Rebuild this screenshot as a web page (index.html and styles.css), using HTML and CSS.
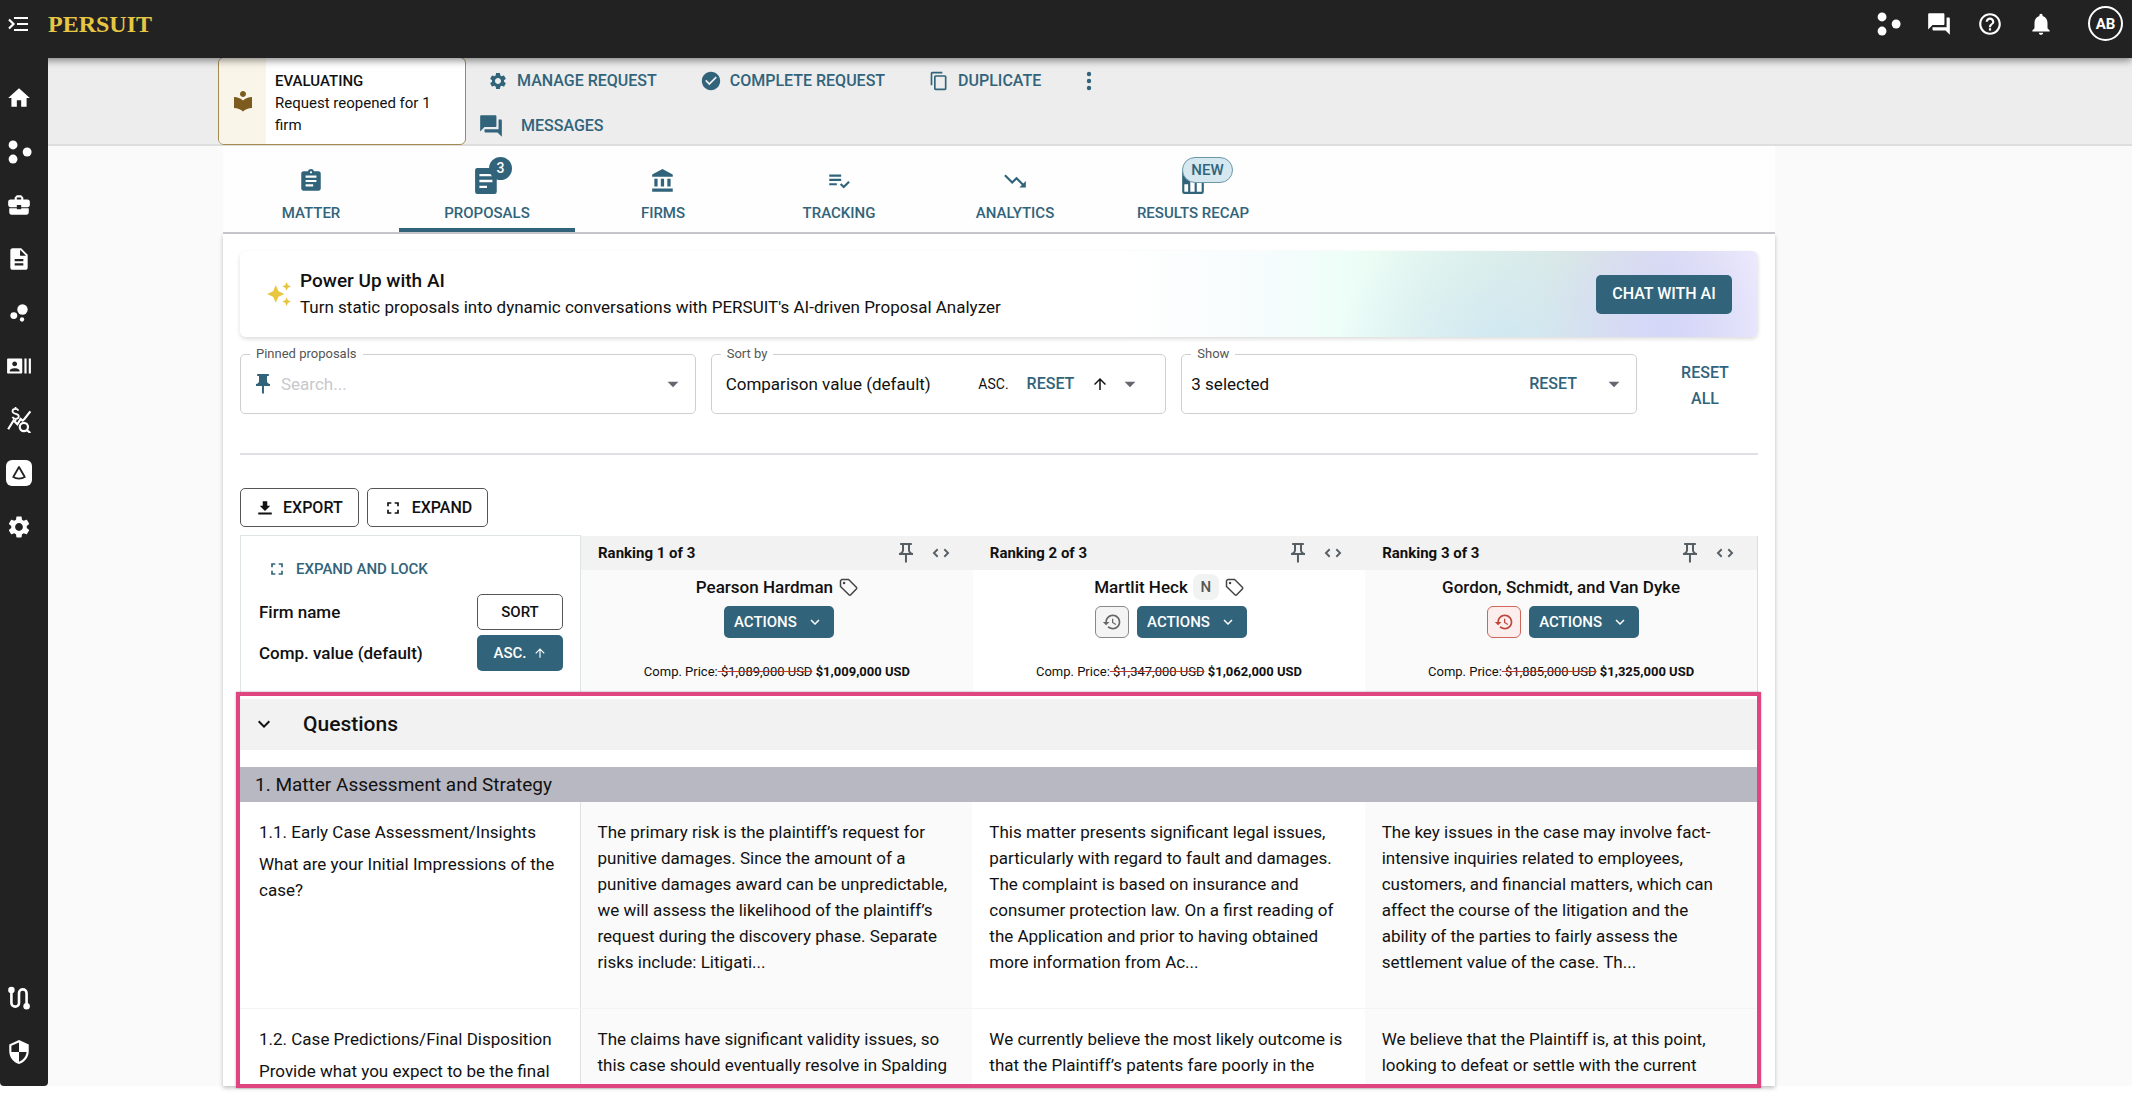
FILE: index.html
```html
<!DOCTYPE html>
<html lang="en">

<head>
  <meta charset="UTF-8" />
  <meta name="viewport" content="width=device-width, initial-scale=1" />
  <title>PERSUIT - Proposals</title>
  <link rel="stylesheet" href="styles.css">
</head>

<body>

  <!-- Icon sprite -->
  <svg class="sprite" aria-hidden="true">
    <symbol id="i-menu" viewBox="0 0 24 24"><path d="M8 6h14M11 12h11M8 18h14M3 7.500l4.500 4.500L3 16.500" fill="none" stroke="currentColor" stroke-width="2.200"/></symbol>
    <symbol id="i-dots" viewBox="0 0 24 24"><circle cx="6.500" cy="5.500" r="4.100"/><circle cx="6.500" cy="18.500" r="4.100"/><circle cx="19.500" cy="12" r="4.100"/></symbol>
    <symbol id="i-home" viewBox="0 0 24 24"><path d="M10 20v-6h4v6h5v-8h3L12 3 2 12h3v8z"/></symbol>
    <symbol id="i-case" viewBox="0 0 24 24"><path d="M10 16v-1H3.010L3 19c0 1.110.890 2 2 2h14c1.110 0 2-.890 2-2v-4h-7v1h-4zm10-9h-4.010V5l-2-2h-4l-2 2v2H4c-1.100 0-2 .900-2 2v3c0 1.110.890 2 2 2h6v-2h4v2h6c1.100 0 2-.900 2-2V9c0-1.100-.900-2-2-2zm-6 0h-4V5h4v2z"/></symbol>
    <symbol id="i-doc" viewBox="0 0 24 24"><path d="M14 2H6c-1.100 0-1.990.900-1.990 2L4 20c0 1.100.890 2 1.990 2H18c1.100 0 2-.900 2-2V8l-6-6zm2 16H8v-2h8v2zm0-4H8v-2h8v2zm-3-5V3.500L18.500 9H13z"/></symbol>
    <symbol id="i-bubbles" viewBox="0 0 24 24"><circle cx="7.200" cy="14.400" r="3.200"/><circle cx="14.800" cy="18" r="2"/><circle cx="15.200" cy="8.800" r="4.800"/></symbol>
    <symbol id="i-people" viewBox="0 0 24 24"><path d="M21 5v14h2V5h-2zm-4 14h2V5h-2v14zM14 5H2c-.55 0-1 .45-1 1v12c0 .55.45 1 1 1h12c.55 0 1-.45 1-1V6c0-.55-.45-1-1-1zM8 7.750c1.240 0 2.250 1.010 2.250 2.250S9.240 12.250 8 12.250 5.750 11.240 5.750 10 6.760 7.750 8 7.750zM12.500 17h-9v-.75c0-1.500 3-2.250 4.500-2.250s4.500.75 4.500 2.250V17z"/></symbol>
    <symbol id="i-rates" viewBox="0 0 24 24"><g fill="none" stroke="currentColor" stroke-width="2"><path d="M2 20.500l5-8 3.500 3.500 3-5 1.800 1.600 1.700-1.600L22.500 4"/><circle cx="16.500" cy="18.500" r="3.800"/><path d="M19.300 21.300l3.200 2.700"/><path d="M11.500 3.300C11 2.200 10 1.800 8.800 1.800c-1.600 0-2.800.8-2.800 2.200 0 3.200 5.800 1.500 5.800 4.600 0 1.400-1.300 2.300-2.900 2.300-1.300 0-2.500-.6-3-1.700M8.800 0v2M8.800 11v2" stroke-width="1.600"/></g></symbol>
    <symbol id="i-prism" viewBox="0 0 26 26"><rect width="26" height="26" rx="6"/><path d="M7.500 16.500L13 7l5.500 9.500M6.500 16.500c4 2.600 9 2.600 13 0" fill="none" stroke="#222" stroke-width="1.800" stroke-linejoin="round"/></symbol>
    <symbol id="i-gear" viewBox="0 0 24 24"><path d="M19.140 12.940c.04-.3.060-.61.060-.94 0-.32-.02-.64-.07-.94l2.030-1.580c.18-.14.230-.41.120-.61l-1.920-3.320c-.12-.22-.37-.29-.59-.22l-2.390.96c-.5-.38-1.030-.7-1.620-.94l-.36-2.540c-.04-.24-.24-.41-.48-.41h-3.840c-.24 0-.43.170-.47.410l-.36 2.540c-.59.240-1.130.570-1.620.940l-2.390-.96c-.22-.08-.47 0-.59.220L2.740 8.870c-.12.210-.08.470.120.610l2.030 1.580c-.05.300-.09.630-.09.940s.020.640.070.940l-2.030 1.580c-.18.140-.23.410-.12.610l1.920 3.320c.12.220.37.290.59.220l2.390-.96c.5.380 1.030.7 1.620.94l.36 2.540c.05.240.24.410.48.410h3.840c.24 0 .44-.17.470-.41l.36-2.540c.59-.24 1.130-.56 1.620-.94l2.390.96c.22.080.47 0 .59-.22l1.920-3.320c.12-.22.070-.47-.12-.61l-2.010-1.580zM12 15.600c-1.980 0-3.600-1.620-3.600-3.600s1.620-3.600 3.600-3.600 3.600 1.620 3.600 3.600-1.620 3.600-3.600 3.600z"/></symbol>
    <symbol id="i-route" viewBox="0 0 24 24"><path d="M5 4v12.500a3.500 3.500 0 0 0 7 0v-9a3.500 3.500 0 0 1 7 0V20" fill="none" stroke="currentColor" stroke-width="2.400"/><circle cx="5" cy="4.500" r="3"/><circle cx="19" cy="19.500" r="3"/></symbol>
    <symbol id="i-shield" viewBox="0 0 24 24"><path d="M12 1L3 5v6c0 5.550 3.840 10.740 9 12 5.160-1.260 9-6.450 9-12V5l-9-4zm0 10.990h7c-.53 4.120-3.280 7.790-7 8.940V12H5V6.300l7-3.110v8.800z"/></symbol>
    <symbol id="i-chat" viewBox="0 0 24 24"><path d="M21 6h-2v9H6v2c0 .55.45 1 1 1h11l4 4V7c0-.55-.45-1-1-1zm-4 6V3c0-.55-.45-1-1-1H3c-.55 0-1 .45-1 1v14l4-4h10c.55 0 1-.45 1-1z"/></symbol>
    <symbol id="i-help" viewBox="0 0 24 24"><path d="M11 18h2v-2h-2v2zm1-16C6.480 2 2 6.480 2 12s4.480 10 10 10 10-4.480 10-10S17.520 2 12 2zm0 18c-4.410 0-8-3.590-8-8s3.590-8 8-8 8 3.590 8 8-3.590 8-8 8zm0-14c-2.210 0-4 1.790-4 4h2c0-1.100.900-2 2-2s2 .900 2 2c0 2-3 1.750-3 5h2c0-2.250 3-2.500 3-5 0-2.210-1.790-4-4-4z"/></symbol>
    <symbol id="i-bell" viewBox="0 0 24 24"><path d="M12 22c1.100 0 2-.900 2-2h-4c0 1.100.890 2 2 2zm6-6v-5c0-3.070-1.640-5.640-4.500-6.320V4c0-.83-.67-1.500-1.500-1.500s-1.500.67-1.500 1.500v.68C7.630 5.360 6 7.920 6 11v5l-2 2v1h16v-1l-2-2z"/></symbol>
    <symbol id="i-reader" viewBox="0 0 24 24"><path d="M12 11.550C9.640 9.350 6.480 8 3 8v11c3.480 0 6.640 1.350 9 3.550 2.360-2.190 5.520-3.550 9-3.550V8c-3.480 0-6.640 1.350-9 3.550zM12 8c1.660 0 3-1.340 3-3s-1.340-3-3-3-3 1.340-3 3 1.340 3 3 3z"/></symbol>
    <symbol id="i-check" viewBox="0 0 24 24"><path d="M12 1C5.900 1 1 5.900 1 12s4.900 11 11 11 11-4.900 11-11S18.100 1 12 1zm-2 16l-5-5 1.410-1.410L10 14.170l7.590-7.590L19 8l-9 9z"/></symbol>
    <symbol id="i-copy" viewBox="0 0 24 24"><path d="M16 1H4c-1.100 0-2 .900-2 2v14h2V3h12V1zm3 4H8c-1.100 0-2 .900-2 2v14c0 1.100.900 2 2 2h11c1.100 0 2-.900 2-2V7c0-1.100-.900-2-2-2zm0 16H8V7h11v14z"/></symbol>
    <symbol id="i-more" viewBox="0 0 24 24"><circle cx="12" cy="5" r="2.200"/><circle cx="12" cy="12" r="2.200"/><circle cx="12" cy="19" r="2.200"/></symbol>
    <symbol id="i-clipboard" viewBox="0 0 24 24"><path d="M19 3h-4.180C14.400 1.840 13.300 1 12 1c-1.300 0-2.400.84-2.820 2H5c-1.100 0-2 .900-2 2v14c0 1.100.900 2 2 2h14c1.100 0 2-.900 2-2V5c0-1.100-.900-2-2-2zm-7 0c.55 0 1 .45 1 1s-.45 1-1 1-1-.45-1-1 .45-1 1-1zm2 14H7v-2h7v2zm3-4H7v-2h10v2zm0-4H7V7h10v2z"/></symbol>
    <symbol id="i-article" viewBox="0 0 24 24"><path d="M3 0h16a2 2 0 0 1 2 2v20a2 2 0 0 1-2 2H3a2 2 0 0 1-2-2V2a2 2 0 0 1 2-2zM5 5.500v2.200h12V5.500zM5 10.900v2.200h12v-2.200zM5 16.300v2.200h7v-2.200z" fill-rule="evenodd"/></symbol>
    <symbol id="i-bank" viewBox="0 0 24 24"><path d="M4 10v7h3v-7H4zm6 0v7h3v-7h-3zM2 22h19v-3H2v3zm14-12v7h3v-7h-3zm-4.500-9L2 6v2h19V6l-9.500-5z"/></symbol>
    <symbol id="i-tracking" viewBox="0 0 24 24"><path d="M3 10h11v2H3zM3 6h11v2H3zM3 14h7v2H3zM20.590 11.930l-4.250 4.240-2.120-2.120-1.410 1.410 3.530 3.530L22 13.340z"/></symbol>
    <symbol id="i-down-trend" viewBox="0 0 24 24"><path d="M16 18l2.290-2.290-4.880-4.880-4 4L2 7.410 3.410 6l6 6 4-4 6.300 6.290L22 12v6z"/></symbol>
    <symbol id="i-recap" viewBox="0 0 24 24"><path d="M4 2h16a2 2 0 0 1 2 2v18a2 2 0 0 1-2 2H4a2 2 0 0 1-2-2V4a2 2 0 0 1 2-2zm0 13v7h3.500v-7zm5.500-4v11h4V11zm6 0v11H20V11z" fill-rule="evenodd"/></symbol>
    <symbol id="i-sparkle" viewBox="0 0 24 24"><path d="M19 9l1.250-2.750L23 5l-2.750-1.250L19 1l-1.250 2.750L15 5l2.750 1.250L19 9zm-7.500.5L9 4 6.500 9.500 1 12l5.500 2.500L9 20l2.500-5.500L17 12l-5.500-2.500zM19 15l-1.250 2.750L15 19l2.750 1.250L19 23l1.250-2.750L23 19l-2.750-1.250L19 15z"/></symbol>
    <symbol id="i-pin" viewBox="0 0 24 24"><path d="M16 9V4h1c.55 0 1-.45 1-1s-.45-1-1-1H7c-.55 0-1 .45-1 1s.45 1 1 1h1v5c0 1.660-1.340 3-3 3v2h5.970v7l1 1 1-1v-7H19v-2c-1.660 0-3-1.340-3-3z"/></symbol>
    <symbol id="i-pin-line" viewBox="0 0 24 24"><path d="M14 4v5c0 1.120.370 2.160 1 3H9c.65-.86 1-1.900 1-3V4h4m3-2H7c-.55 0-1 .45-1 1s.45 1 1 1h1v5c0 1.660-1.340 3-3 3v2h5.970v7l1 1 1-1v-7H19v-2c-1.660 0-3-1.340-3-3V4h1c.55 0 1-.45 1-1s-.45-1-1-1z"/></symbol>
    <symbol id="i-code" viewBox="0 0 24 24"><path d="M8 7.500L3.500 12 8 16.500M16 7.500l4.500 4.500-4.500 4.500" fill="none" stroke="currentColor" stroke-width="2.200"/></symbol>
    <symbol id="i-tag" viewBox="0 0 24 24"><path d="M3 4.500L4.500 3h8.200L22 12.300a1.500 1.500 0 0 1 0 2l-6.700 7a1.500 1.500 0 0 1-2.200 0L3 11.500z" fill="none" stroke="currentColor" stroke-width="1.800" stroke-linejoin="round"/><circle cx="7.300" cy="7.300" r="1.500"/></symbol>
    <symbol id="i-history" viewBox="0 0 24 24"><path d="M13 3c-4.970 0-9 4.030-9 9H1l3.890 3.890.07.14L9 12H6c0-3.870 3.130-7 7-7s7 3.130 7 7-3.130 7-7 7c-1.930 0-3.680-.79-4.940-2.060l-1.420 1.420C8.270 19.990 10.510 21 13 21c4.970 0 9-4.030 9-9s-4.030-9-9-9zm-1 5v5l4.280 2.540.72-1.210-3.500-2.080V8H12z"/></symbol>
    <symbol id="i-download" viewBox="0 0 24 24"><path d="M19 9h-4V3H9v6H5l7 7 7-7zM3 18v2.500h18V18H3z"/></symbol>
    <symbol id="i-full" viewBox="0 0 24 24"><path d="M7 14H5v5h5v-2H7v-3zm-2-4h2V7h3V5H5v5zm12 7h-3v2h5v-5h-2v3zM14 5v2h3v3h2V5h-5z"/></symbol>
    <symbol id="i-drop" viewBox="0 0 24 24"><path d="M7 10l5 5 5-5z"/></symbol>
    <symbol id="i-up" viewBox="0 0 24 24"><path d="M4 12l1.410 1.410L11 7.830V20h2V7.830l5.580 5.590L20 12l-8-8-8 8z"/></symbol>
    <symbol id="i-chevron" viewBox="0 0 24 24"><path d="M7.410 8.590L12 13.170l4.590-4.580L18 10l-6 6-6-6 1.410-1.410z"/></symbol>
  </svg>

  <header class="topbar">
    <button class="icon-btn" aria-label="Open menu"><svg class="icon-m"><use href="#i-menu"/></svg></button>
    <a class="logo" href="#">PERSUIT</a>
    <div class="topbar-actions">
      <button class="icon-btn" aria-label="Apps"><svg class="icon-l"><use href="#i-dots"/></svg></button>
      <button class="icon-btn" aria-label="Messages"><svg class="icon-l"><use href="#i-chat"/></svg></button>
      <button class="icon-btn" aria-label="Help"><svg class="icon-l"><use href="#i-help"/></svg></button>
      <button class="icon-btn" aria-label="Notifications"><svg class="icon-l"><use href="#i-bell"/></svg></button>
      <button class="avatar">AB</button>
    </div>
  </header>

  <div class="shell">
    <nav class="sidebar">
      <div class="nav-main">
        <a href="#" aria-label="Home"><svg class="icon-l"><use href="#i-home"/></svg></a>
        <a href="#" aria-label="Apps"><svg class="icon-l"><use href="#i-dots"/></svg></a>
        <a href="#" aria-label="Matters"><svg class="icon-l"><use href="#i-case"/></svg></a>
        <a href="#" aria-label="Documents"><svg class="icon-l"><use href="#i-doc"/></svg></a>
        <a href="#" aria-label="Insights"><svg class="icon-l"><use href="#i-bubbles"/></svg></a>
        <a href="#" aria-label="Firms"><svg class="icon-l"><use href="#i-people"/></svg></a>
        <a href="#" aria-label="Rates"><svg class="icon-l"><use href="#i-rates"/></svg></a>
        <a href="#" aria-label="Prism"><svg class="icon-l"><use href="#i-prism"/></svg></a>
        <a href="#" aria-label="Settings"><svg class="icon-l"><use href="#i-gear"/></svg></a>
      </div>
      <div class="nav-foot">
        <a href="#" aria-label="Integrations"><svg class="icon-l"><use href="#i-route"/></svg></a>
        <a href="#" aria-label="Security"><svg class="icon-l"><use href="#i-shield"/></svg></a>
      </div>
    </nav>

    <main class="content">

      <!-- Request status and actions -->
      <div class="request-bar">
        <div class="status">
          <div class="status-icon"><svg class="icon-m"><use href="#i-reader"/></svg></div>
          <div class="status-text">
            <strong>EVALUATING</strong>
            <span>Request reopened for 1 firm</span>
          </div>
        </div>
        <div class="request-actions">
          <div class="action-row">
            <button class="action"><svg class="icon-s"><use href="#i-gear"/></svg>MANAGE REQUEST</button>
            <button class="action"><svg class="icon-s"><use href="#i-check"/></svg>COMPLETE REQUEST</button>
            <button class="action"><svg class="icon-s"><use href="#i-copy"/></svg>DUPLICATE</button>
            <button class="action more" aria-label="More"><svg class="icon-m"><use href="#i-more"/></svg></button>
          </div>
          <div class="action-row">
            <button class="action messages"><svg class="icon-l"><use href="#i-chat"/></svg>MESSAGES</button>
          </div>
        </div>
      </div>

      <div class="page">
        <div class="tabs">
          <a class="tab" href="#"><svg class="icon-l"><use href="#i-clipboard"/></svg>MATTER</a>
          <a class="tab active" href="#"><span class="tab-icon"><svg class="icon-l"><use href="#i-article"/></svg><span class="count">3</span></span>PROPOSALS</a>
          <a class="tab" href="#"><svg class="icon-l"><use href="#i-bank"/></svg>FIRMS</a>
          <a class="tab" href="#"><svg class="icon-l"><use href="#i-tracking"/></svg>TRACKING</a>
          <a class="tab" href="#"><svg class="icon-l"><use href="#i-down-trend"/></svg>ANALYTICS</a>
          <a class="tab wide" href="#"><span class="tab-icon"><svg class="icon-l"><use href="#i-recap"/></svg><span class="new">NEW</span></span>RESULTS RECAP</a>
        </div>

        <div class="panel">
          <div class="banner">
            <svg class="icon-l sparkle"><use href="#i-sparkle"/></svg>
            <div class="banner-text">
              <h2>Power Up with AI</h2>
              <p>Turn static proposals into dynamic conversations with PERSUIT's AI-driven Proposal Analyzer</p>
            </div>
            <button class="btn solid chat">CHAT WITH AI</button>
          </div>

          <!-- Filters -->
          <div class="filters">
            <fieldset class="field pinned">
              <legend><label for="pinned">Pinned proposals</label></legend>
              <svg class="icon-m pin"><use href="#i-pin"/></svg>
              <input id="pinned" type="text" placeholder="Search...">
              <svg class="icon-l drop"><use href="#i-drop"/></svg>
            </fieldset>
            <fieldset class="field sort">
              <legend><label for="sortby">Sort by</label></legend>
              <select id="sortby"><option>Comparison value (default)</option></select>
              <span class="order">ASC.</span>
              <button class="link">RESET</button>
              <button class="icon-btn" aria-label="Ascending"><svg class="icon-xs"><use href="#i-up"/></svg></button>
              <svg class="icon-l drop"><use href="#i-drop"/></svg>
            </fieldset>
            <fieldset class="field show">
              <legend><label for="show">Show</label></legend>
              <select id="show"><option>3 selected</option></select>
              <button class="link">RESET</button>
              <svg class="icon-l drop"><use href="#i-drop"/></svg>
            </fieldset>
            <button class="link reset-all">RESET ALL</button>
          </div>

          <hr>

          <div class="tools">
            <button class="btn outline"><svg class="icon-xs"><use href="#i-download"/></svg>EXPORT</button>
            <button class="btn outline"><svg class="icon-s"><use href="#i-full"/></svg>EXPAND</button>
          </div>

          <!-- Firms being compared -->
          <table class="compare firms">
            <tr>
              <td class="side">
                <button class="link expand"><svg class="icon-s"><use href="#i-full"/></svg>EXPAND AND LOCK</button>
                <div class="sort-row">Firm name <button class="btn sort-btn outline">SORT</button></div>
                <div class="sort-row">Comp. value (default) <button class="btn sort-btn solid">ASC. <svg class="icon-xxs"><use href="#i-up"/></svg></button></div>
              </td>
              <th scope="col">
                <div class="rank">Ranking 1 of 3 <svg class="icon-m"><use href="#i-pin-line"/></svg><svg class="icon-s"><use href="#i-code"/></svg></div>
                <div class="firm">Pearson Hardman <svg class="icon-s"><use href="#i-tag"/></svg></div>
                <div class="firm-actions">
                  <button class="btn solid actions">ACTIONS <svg class="icon-xs"><use href="#i-chevron"/></svg></button>
                </div>
                <div class="price">Comp. Price:<s> $1,089,000 USD</s> <b>$1,009,000 USD</b></div>
              </th>
              <th scope="col">
                <div class="rank">Ranking 2 of 3 <svg class="icon-m"><use href="#i-pin-line"/></svg><svg class="icon-s"><use href="#i-code"/></svg></div>
                <div class="firm">Martlit Heck <span class="chip">N</span> <svg class="icon-s"><use href="#i-tag"/></svg></div>
                <div class="firm-actions">
                  <button class="history" aria-label="History"><svg class="icon-s"><use href="#i-history"/></svg></button>
                  <button class="btn solid actions">ACTIONS <svg class="icon-xs"><use href="#i-chevron"/></svg></button>
                </div>
                <div class="price">Comp. Price:<s> $1,347,000 USD</s> <b>$1,062,000 USD</b></div>
              </th>
              <th scope="col">
                <div class="rank">Ranking 3 of 3 <svg class="icon-m"><use href="#i-pin-line"/></svg><svg class="icon-s"><use href="#i-code"/></svg></div>
                <div class="firm">Gordon, Schmidt, and Van Dyke</div>
                <div class="firm-actions">
                  <button class="history late" aria-label="History"><svg class="icon-s"><use href="#i-history"/></svg></button>
                  <button class="btn solid actions">ACTIONS <svg class="icon-xs"><use href="#i-chevron"/></svg></button>
                </div>
                <div class="price">Comp. Price:<s> $1,885,000 USD</s> <b>$1,325,000 USD</b></div>
              </th>
            </tr>
          </table>

          <!-- Questions -->
          <section class="questions">
            <button class="section-head"><svg class="icon-m"><use href="#i-chevron"/></svg>Questions</button>
            <h3>1. Matter Assessment and Strategy</h3>
            <table class="compare answers">
              <tr>
                <td class="side">
                  <p>1.1. Early Case Assessment/Insights</p>
                  <p>What are your Initial Impressions of the case?</p>
                </td>
                <td>The primary risk is the plaintiff’s request for punitive damages. Since the amount of a punitive damages award can be unpredictable, we will assess the likelihood of the plaintiff’s request during the discovery phase. Separate risks include: Litigati...</td>
                <td>This matter presents significant legal issues, particularly with regard to fault and damages. The complaint is based on insurance and consumer protection law. On a first reading of the Application and prior to having obtained more information from Ac...</td>
                <td>The key issues in the case may involve fact-intensive inquiries related to employees, customers, and financial matters, which can affect the course of the litigation and the ability of the parties to fairly assess the settlement value of the case. Th...</td>
              </tr>
              <tr>
                <td class="side">
                  <p>1.2. Case Predictions/Final Disposition</p>
                  <p>Provide what you expect to be the final</p>
                </td>
                <td>The claims have significant validity issues, so this case should eventually resolve in Spalding</td>
                <td>We currently believe the most likely outcome is that the Plaintiff’s patents fare poorly in the</td>
                <td>We believe that the Plaintiff is, at this point, looking to defeat or settle with the current</td>
              </tr>
            </table>
          </section>
        </div>
      </div>
    </main>
  </div>

</body>

</html>
```

FILE: styles.css
```css
* {
  box-sizing: border-box;
}

body {
  display: flex;
  flex-direction: column;
  height: 100vh;
  margin: 0;
  padding-bottom: 10px;
  overflow: hidden;
  background: #fff;
  color: #111;
  font-family: Roboto, "Liberation Sans", sans-serif;
  font-size: 17px;
  line-height: 26px;
}

button,
input,
select {
  margin: 0;
  padding: 0;
  border: 0;
  background: none;
  color: inherit;
  font: inherit;
}

a {
  color: inherit;
  text-decoration: none;
}

svg {
  display: block;
  flex: none;
  fill: currentColor;
}

.sprite {
  display: none;
}

.icon-xxs { width: 14px; height: 14px; }
.icon-xs { width: 18px; height: 18px; }
.icon-s { width: 20px; height: 20px; }
.icon-m { width: 24px; height: 24px; }
.icon-l { width: 26px; height: 26px; }

/* Top bar */
.topbar {
  position: relative;
  z-index: 2;
  display: flex;
  flex: none;
  align-items: flex-start;
  height: 58px;
  padding: 6px 9px 0 6px;
  background: #222;
  color: #fff;
  box-shadow: 0 2px 8px rgba(0, 0, 0, 0.5);
}

.topbar > .icon-btn,
.logo {
  display: flex;
  align-items: center;
  height: 35px;
}

.logo {
  margin-left: 18px;
  color: #e6c744;
  font-family: "Liberation Serif", serif;
  font-size: 24px;
  font-weight: bold;
}

.topbar-actions {
  display: flex;
  align-items: center;
  gap: 25px;
  margin-left: auto;
}

.avatar {
  width: 35px;
  height: 35px;
  margin-left: 9px;
  border: 2px solid #fff;
  border-radius: 50%;
  font-size: 15px;
  font-weight: 700;
}

/* Sidebar */
.shell {
  display: flex;
  flex: 1;
  min-height: 0;
}

.sidebar {
  position: relative;
  z-index: 3;
  display: flex;
  flex: none;
  flex-direction: column;
  justify-content: space-between;
  width: 48px;
  padding: 27px 5px 21px 6px;
  background: #222;
  color: #fff;
  border-radius: 0 0 4px 4px;
}

.nav-main,
.nav-foot {
  display: flex;
  flex-direction: column;
  justify-content: space-between;
}

.nav-main {
  height: 455px;
}

.nav-foot {
  height: 80px;
}

.content {
  display: flex;
  flex: 1;
  flex-direction: column;
  min-width: 0;
  background: #fafafa;
}

/* Request bar */
.request-bar {
  display: flex;
  flex: none;
  height: 88px;
  padding-left: 170px;
  background: #ededed;
  border-bottom: 2px solid #dedede;
}

.status {
  display: flex;
  width: 248px;
  height: 88px;
  margin-top: -1px;
  overflow: hidden;
  background: #fff;
  border: 1px solid #a48a50;
  border-radius: 6px;
}

.status-icon {
  display: flex;
  align-items: center;
  justify-content: center;
  width: 47px;
  background: #faf5e9;
  color: #7d5a1e;
}

.status-text {
  flex: 1;
  padding: 12px 9px;
  font-size: 15px;
  line-height: 22px;
}

.status-text strong,
.status-text span {
  display: block;
}

strong {
  font-weight: 500;
}

.action-row {
  display: flex;
  align-items: center;
  height: 45px;
}

.action {
  display: flex;
  align-items: center;
  gap: 9px;
  padding: 0 22px;
  color: #31647b;
  font-size: 16px;
  font-weight: 500;
}

.more {
  padding: 0 14px;
}

.messages {
  gap: 17px;
  padding: 0 12px;
}

/* Tabs */
.page {
  display: flex;
  flex: 1;
  flex-direction: column;
  min-height: 0;
  padding: 0 357px 0 175px;
}

.tabs {
  display: flex;
  flex: none;
  height: 88px;
  background: #fefefe;
  border-bottom: 2px solid #c9c9d0;
}

.tab {
  display: flex;
  flex-direction: column;
  align-items: center;
  gap: 6px;
  min-width: 176px;
  padding: 22px 14px 0;
  color: #31647b;
  font-size: 15px;
  font-weight: 500;
}

.tab.wide {
  min-width: 180px;
}

.tab.active {
  border-bottom: 4px solid #31647b;
}

.tab-icon {
  position: relative;
}

.count,
.new {
  position: absolute;
  top: -11px;
  text-align: center;
}

.count {
  left: 15px;
  width: 23px;
  height: 23px;
  background: #31647b;
  border-radius: 50%;
  color: #fff;
  font-size: 14px;
  line-height: 23px;
}

.new {
  left: 2px;
  width: 51px;
  background: #d5e7ef;
  border: 1px solid #6b97a9;
  border-radius: 13px;
  line-height: 24px;
}

/* Main panel */
.panel {
  display: flex;
  flex: 1;
  flex-direction: column;
  min-height: 0;
  padding: 17px;
  background: #fff;
  padding-bottom: 0;
  box-shadow: 0 2px 4px rgba(0, 0, 0, 0.25);
}

.banner {
  display: flex;
  flex: none;
  align-items: center;
  height: 86px;
  padding: 0 26px;
  border-radius: 6px;
  background:
    radial-gradient(circle at 94% 95%, rgba(212, 214, 250, 0.9), rgba(212, 214, 250, 0) 9%),
    radial-gradient(circle at 83% 130%, rgba(205, 230, 245, 0.9), rgba(205, 230, 245, 0) 13%),
    linear-gradient(90deg, #fff 58%, #f7fcfd 67%, #edfef8 73%, #e3f4e8 81%, #dbe6e3 88%, #dcdcf0 94%, #efebfd 100%);
  box-shadow: 0 2px 4px rgba(0, 0, 0, 0.14);
}

.sparkle {
  color: #e8c63f;
}

.banner-text {
  flex: 1;
  margin-left: 8px;
}

.banner h2,
.banner p,
h3 {
  margin: 0;
}

.banner h2 {
  font-size: 19px;
  font-weight: 500;
}

.btn {
  display: flex;
  align-items: center;
  justify-content: center;
  border-radius: 5px;
  font-size: 15px;
  font-weight: 500;
}

.solid {
  background: #31647b;
  color: #fff;
}

.outline {
  background: #fff;
  border: 1px solid #555;
  color: #111;
}

.chat {
  width: 136px;
  height: 39px;
  font-size: 16px;
}

/* Filters */
.filters {
  display: grid;
  flex: none;
  grid-template-columns: 1fr 1fr 1fr 106px;
  gap: 15px;
  margin-top: 8px;
}

.field {
  display: flex;
  align-items: center;
  min-width: 0;
  height: 69px;
  margin: 0;
  padding: 0 9px 8px 14px;
  border: 1px solid #cfcfcf;
  border-radius: 5px;
}

.field legend {
  margin-left: -5px;
  padding: 0 6px;
  color: #555;
  font-size: 13px;
  line-height: 18px;
}

.field input,
.field select {
  flex: 1;
  min-width: 0;
  appearance: none;
  outline: none;
}

.pinned {
  padding-left: 10px;
}

.pinned legend {
  margin-left: -1px;
}

.pinned input {
  margin-left: 6px;
}

.pinned input::placeholder {
  color: #c8c8cc;
}

.pin {
  color: #31647b;
}

.drop {
  color: #666670;
}

.show {
  padding-left: 9px;
}

.show legend {
  margin-left: 0;
}

.sort {
  padding-right: 22px;
}

.order {
  margin-right: 18px;
  font-size: 14px;
}

.sort .icon-btn {
  margin: 0 8px 0 17px;
}

.link {
  color: #31647b;
  font-size: 16px;
  font-weight: 500;
  cursor: pointer;
}

.show .link {
  margin-right: 24px;
}

.reset-all {
  padding: 12px 28px 0;
}

hr {
  flex: none;
  width: 100%;
  height: 2px;
  margin: 39px 0 33px;
  border: 0;
  background: #e0e0e4;
}

.tools {
  display: flex;
  flex: none;
  gap: 8px;
  margin-bottom: 8px;
}

.tools .btn {
  gap: 9px;
  height: 39px;
  padding: 0 15px;
  font-size: 16px;
}

/* Comparison table */
.compare {
  width: 100%;
  table-layout: fixed;
  border-collapse: collapse;
}

.compare td,
.compare th {
  background: #fafafa;
  vertical-align: top;
}

.compare td.side,
.compare td:nth-child(3),
.compare th:nth-child(3) {
  background: #fff;
}

.compare .side {
  width: 340px;
  border-right: 1px solid #e0e0e4;
}

.firms {
  flex: none;
  border-right: 1px solid #dcdcdc;
}

.firms td,
.firms th {
  padding: 0;
  font-weight: 500;
}

.firms .side {
  padding: 20px 17px 19px 18px;
  border: 1px solid #dfe4e6;
  border-bottom: 0;
}

.expand {
  display: flex;
  align-items: center;
  gap: 9px;
  margin: 0 0 12px 8px;
  font-size: 15px;
}

.sort-row {
  display: flex;
  align-items: center;
  justify-content: space-between;
  margin-bottom: 5px;
}

.sort-row:last-child {
  margin-bottom: 0;
}

.sort-btn {
  width: 86px;
  height: 36px;
  gap: 6px;
}

.rank {
  display: flex;
  align-items: center;
  gap: 13px;
  height: 34px;
  margin-bottom: 4px;
  padding: 0 22px 0 17px;
  background: #f2f2f2;
  font-size: 15px;
  font-weight: 700;
}

.rank svg {
  color: #555e64;
}

.rank svg:first-of-type {
  margin-left: auto;
}

.firm {
  display: flex;
  align-items: center;
  justify-content: center;
  gap: 5px;
}

.firm svg {
  color: #444;
}

.chip {
  width: 26px;
  border-radius: 8px;
  background: #f1f3f3;
  color: #555;
  font-size: 15px;
  text-align: center;
}

.firm-actions {
  display: flex;
  justify-content: center;
  gap: 8px;
  margin: 6px 0 21px;
  padding-left: 4px;
}

.actions {
  width: 110px;
  height: 32px;
  gap: 9px;
}

.history {
  display: flex;
  align-items: center;
  justify-content: center;
  width: 34px;
  height: 32px;
  background: #f4f4f4;
  border: 1px solid #888;
  border-radius: 6px;
  color: #666;
}

.late {
  background: #fbeeec;
  border-color: #d0655a;
  color: #c0453a;
}

.price {
  padding-bottom: 7px;
  font-size: 13px;
  font-weight: 400;
}

.price s {
  text-decoration-color: #c0392b;
}

.price b {
  font-weight: 700;
}

/* Questions */
.questions {
  position: relative;
  flex: 1;
  min-height: 0;
  margin: 0 -3px -2px -4px;
  padding-top: 3px;
  overflow: hidden;
  background: #fff;
  border: 4px solid #df4681;
  box-shadow: 0 0 2px rgba(0, 0, 0, 0.35);
}

.section-head {
  display: flex;
  align-items: center;
  gap: 27px;
  width: 100%;
  height: 51px;
  padding: 0 12px;
  background: #f2f2f2;
  font-size: 21px;
  font-weight: 500;
}

.questions h3 {
  margin-top: 17px;
  padding: 0 15px;
  background: #b8b8c2;
  font-size: 19px;
  font-weight: 400;
  line-height: 35px;
}

.answers td {
  height: 206px;
  padding: 17px 22px 33px 17px;
  border-bottom: 1px solid #f4f4f4;
}

.answers .side {
  padding: 17px 17px 33px 19px;
}

.answers p {
  margin: 0 0 6px;
}
```
